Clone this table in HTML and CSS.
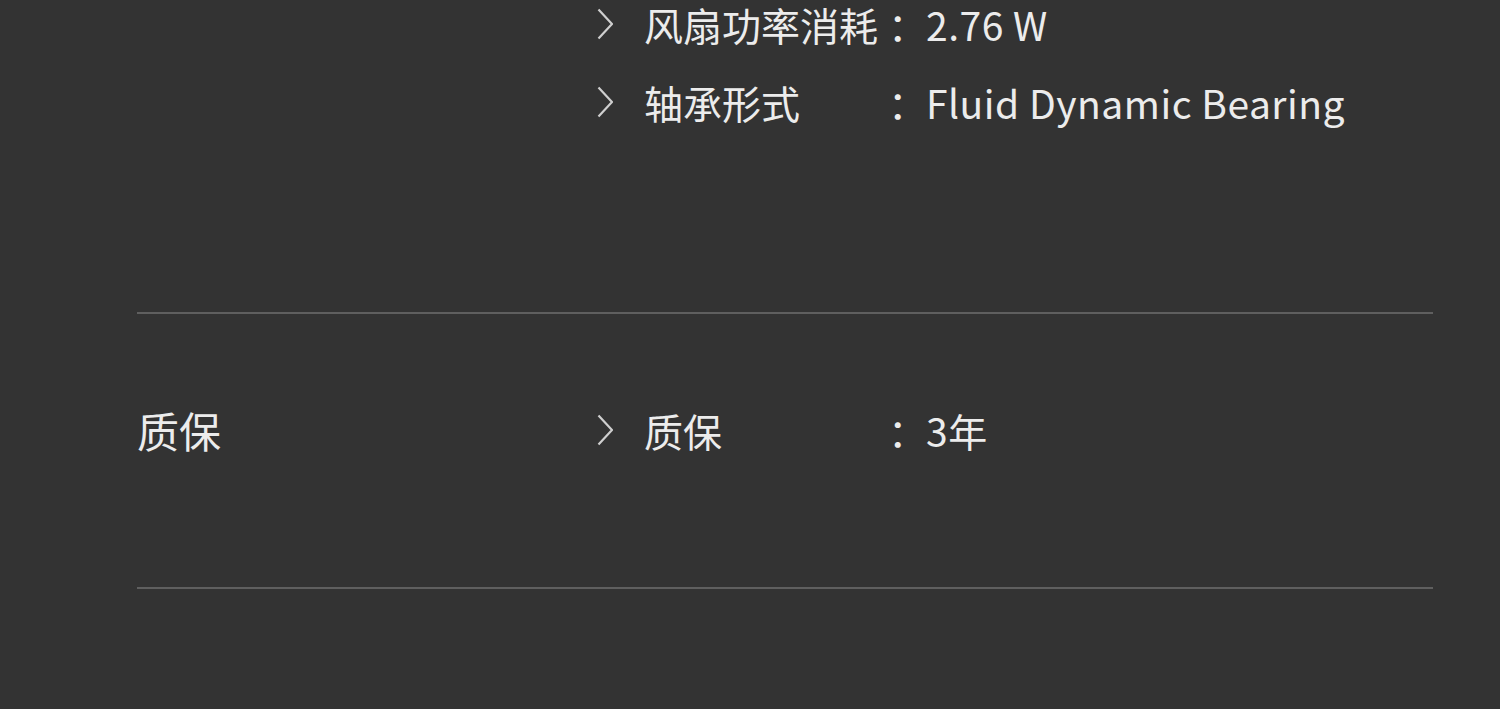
FILE: index.html
```html
<!DOCTYPE html>
<html lang="zh-CN">
<head>
<meta charset="utf-8">
<title>规格</title>
<link rel="stylesheet" href="styles.css">
</head>
<body>
<div class="page">
  <section class="spec-section first">
    <div class="spec-title"></div>
    <ul class="spec-list">
      <li class="spec-row">
        <svg class="chev" viewBox="0 0 16 32" width="16" height="32"><polyline points="1.5,1.5 15,16 1.5,30.5"/></svg>
        <span class="label">风扇功率消耗</span><span class="colon">：</span><span class="value">2.76 W</span>
      </li>
      <li class="spec-row">
        <svg class="chev" viewBox="0 0 16 32" width="16" height="32"><polyline points="1.5,1.5 15,16 1.5,30.5"/></svg>
        <span class="label">轴承形式</span><span class="colon">：</span><span class="value">Fluid Dynamic Bearing</span>
      </li>
    </ul>
  </section>
  <section class="spec-section">
    <div class="spec-title">质保</div>
    <ul class="spec-list">
      <li class="spec-row">
        <svg class="chev" viewBox="0 0 16 32" width="16" height="32"><polyline points="1.5,1.5 15,16 1.5,30.5"/></svg>
        <span class="label">质保</span><span class="colon">：</span><span class="value">3年</span>
      </li>
    </ul>
  </section>
  <div class="end-rule"></div>
</div>
</body>
</html>
```

FILE: styles.css
```css
html, body {
  margin: 0;
  padding: 0;
  background: #333333;
  height: 100%;
  overflow: hidden;
}
body {
  font-family: "Noto Sans CJK SC", "Noto Sans", sans-serif;
  color: #ececec;
}
.page {
  padding: 0 67px 0 137px;
}
.spec-section {
  display: flex;
  align-items: center;
  border-top: 2px solid #5f5f5f;
  padding: 89px 0 130px;
}
.spec-section.first {
  border-top: none;
  margin-top: -3px;
  padding: 0 0 183px;
  align-items: flex-start;
}
.spec-title {
  width: 460px;
  flex: none;
  font-size: 42px;
  line-height: 52px;
}
.spec-list {
  list-style: none;
  margin: 0;
  padding: 0;
  display: flex;
  flex-direction: column;
  gap: 24px;
}
.spec-row {
  display: flex;
  align-items: center;
  height: 54px;
  font-size: 39px;
  line-height: 44px;
}
.chev {
  flex: none;
  margin-right: 31px;
}
.chev polyline {
  fill: none;
  stroke: #cfcfcf;
  stroke-width: 2.2;
}
.label {
  width: 244px;
  flex: none;
  white-space: nowrap;
}
.colon {
  width: 38px;
  flex: none;
}
.value {
  white-space: nowrap;
  letter-spacing: 0.5px;
}
.end-rule {
  border-top: 2px solid #5f5f5f;
}
```
